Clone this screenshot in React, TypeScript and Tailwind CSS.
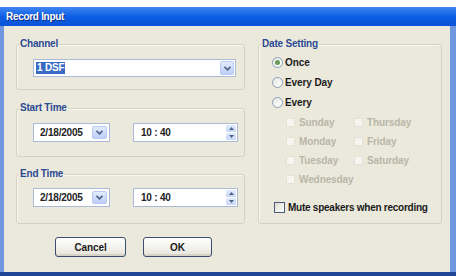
import React from "react";

const font = { fontFamily: '"Liberation Sans", Arial, sans-serif' };

function Chevron() {
  return (
    <svg width="7" height="5" viewBox="0 0 7 5">
      <path d="M0.5 0.8 L3.5 3.8 L6.5 0.8" fill="none" stroke="#4d6185" strokeWidth="1.6" />
    </svg>
  );
}

function DropBtn({ w = "w-[15px]" }: { w?: string }) {
  return (
    <div className={`${w} h-full flex items-center justify-center rounded-[2px] border border-[#b9c9ef] bg-gradient-to-b from-[#e3ebfd] to-[#bccff7]`}>
      <Chevron />
    </div>
  );
}

function Spinner() {
  return (
    <div className="w-[10px] h-full flex flex-col gap-[1px]">
      <div className="flex-1 flex items-center justify-center rounded-[1px] bg-gradient-to-b from-[#e3ebfd] to-[#c6d6f7]">
        <svg width="5" height="3" viewBox="0 0 5 3"><path d="M0 3 L2.5 0 L5 3Z" fill="#4d6185" /></svg>
      </div>
      <div className="flex-1 flex items-center justify-center rounded-[1px] bg-gradient-to-b from-[#e3ebfd] to-[#c6d6f7]">
        <svg width="5" height="3" viewBox="0 0 5 3"><path d="M0 0 L2.5 3 L5 0Z" fill="#4d6185" /></svg>
      </div>
    </div>
  );
}

function Group({ title, className, children }: { title: string; className: string; children: React.ReactNode }) {
  return (
    <fieldset className={`border border-[#d5d2c2] rounded-[3px] shadow-[inset_1px_1px_0_#f7f6f0] ${className}`}>
      <legend className="ml-[2px] px-[1px] text-[10px] leading-[12px] font-bold text-[#2b4a92] tracking-[-0.2px]">{title}</legend>
      {children}
    </fieldset>
  );
}

function DateTimeRow() {
  return (
    <div className="flex items-center pl-[16px] gap-[23px]">
      <div className="w-[77px] h-[19px] bg-white border border-[#a9bbd8] flex items-center justify-between p-[2px]">
        <span className="pl-[4px] text-[10px] font-bold text-[#222] tracking-[-0.2px]">2/18/2005</span>
        <DropBtn />
      </div>
      <div className="w-[105px] h-[19px] bg-white border border-[#a9bbd8] flex items-center justify-between p-[1px] pr-[1px]">
        <span className="pl-[6px] text-[10px] font-bold text-[#222] tracking-[-0.2px]">10 : 40</span>
        <Spinner />
      </div>
    </div>
  );
}

function Radio({ checked, label }: { checked?: boolean; label: string }) {
  return (
    <div className="flex items-center gap-[2px] h-[13px]">
      <div className="w-[11px] h-[11px] rounded-full border border-[#8ca0b8] bg-gradient-to-br from-[#e6e6e0] to-white flex items-center justify-center">
        {checked && <div className="w-[5px] h-[5px] rounded-full bg-[#6a9a5e]" />}
      </div>
      <span className="text-[10px] font-bold text-[#1a1a1a] tracking-[-0.1px]">{label}</span>
    </div>
  );
}

function Day({ label }: { label: string }) {
  return (
    <div className="flex items-center gap-[4px] h-[12px]">
      <div className="w-[9px] h-[9px] bg-[#f6f5ef] border border-[#e4e2d6]" />
      <span className="text-[10px] font-bold text-[#b9b6a8] tracking-[-0.1px]">{label}</span>
    </div>
  );
}

function Button({ label, w }: { label: string; w: string }) {
  return (
    <div className={`${w} h-[20px] rounded-[3px] border border-[#3a4f6e] bg-gradient-to-b from-white to-[#e6e4da] shadow-[inset_0_-2px_0_#d6d3c6] flex items-center justify-center`}>
      <span className="text-[10px] font-bold text-[#1a1a1a] tracking-[-0.1px]">{label}</span>
    </div>
  );
}

export default function App() {
  return (
    <div className="w-[462px] h-[276px] bg-white overflow-hidden" style={font}>
      <div className="mt-[7px] w-[456px] h-[269px] flex flex-col bg-[#6f98e0]">
        <div className="h-[19px] shrink-0 flex items-center pl-[6px] bg-gradient-to-b from-[#3d86f2] via-[#0d5ee6] to-[#0a54d6]">
          <span className="text-[10px] font-bold text-white tracking-[-0.3px] [text-shadow:1px_1px_0_#0a2c7a]">Record Input</span>
        </div>
        <div className="flex-1 flex ml-[4px] mr-[6px] bg-[#ebe9dc]">
          <div className="w-[241px] pl-[12px] pt-[12px] flex flex-col">
            <Group title="Channel" className="w-[229px] h-[52px]">
              <div className="pl-[16px] pr-[8px] pt-[9px]">
                <div className="h-[18px] bg-white border border-[#a9bbd8] flex items-center justify-between p-[1px]">
                  <span className="ml-[1px] px-[1px] h-[12px] leading-[12px] bg-[#3a6bc4] text-white text-[10px] font-bold tracking-[-0.2px]">1 DSF</span>
                  <DropBtn w="w-[14px]" />
                </div>
              </div>
            </Group>
            <Group title="Start Time" className="w-[229px] h-[55px] mt-[12px]">
              <div className="pt-[9px]">
                <DateTimeRow />
              </div>
            </Group>
            <Group title="End Time" className="w-[229px] h-[56px] mt-[11px]">
              <div className="pt-[8px]">
                <DateTimeRow />
              </div>
            </Group>
            <div className="flex gap-[17px] pl-[39px] mt-[13px]">
              <Button label="Cancel" w="w-[71px]" />
              <Button label="OK" w="w-[69px]" />
            </div>
          </div>
          <div className="pl-[13px] pt-[12px]">
            <Group title="Date Setting" className="w-[184px] h-[186px]">
              <div className="pl-[13px] pt-[6px] flex flex-col">
                <div className="flex flex-col gap-[7px]">
                  <Radio checked label="Once" />
                  <Radio label="Every Day" />
                  <Radio label="Every" />
                </div>
                <div className="grid grid-cols-[68px_70px] gap-y-[7px] pl-[14px] mt-[7px]">
                  <Day label="Sunday" />
                  <Day label="Thursday" />
                  <Day label="Monday" />
                  <Day label="Friday" />
                  <Day label="Tuesday" />
                  <Day label="Saturday" />
                  <Day label="Wednesday" />
                </div>
                <div className="flex items-center gap-[3px] mt-[15px] pl-[2px]">
                  <div className="w-[11px] h-[11px] border border-[#4a5a78] bg-gradient-to-br from-[#dcdcd4] to-white" />
                  <span className="text-[10px] font-bold text-[#1a1a1a] tracking-[-0.25px]">Mute speakers when recording</span>
                </div>
              </div>
            </Group>
          </div>
        </div>
        <div className="h-[4px] shrink-0 bg-[#1f4596]" />
      </div>
    </div>
  );
}
